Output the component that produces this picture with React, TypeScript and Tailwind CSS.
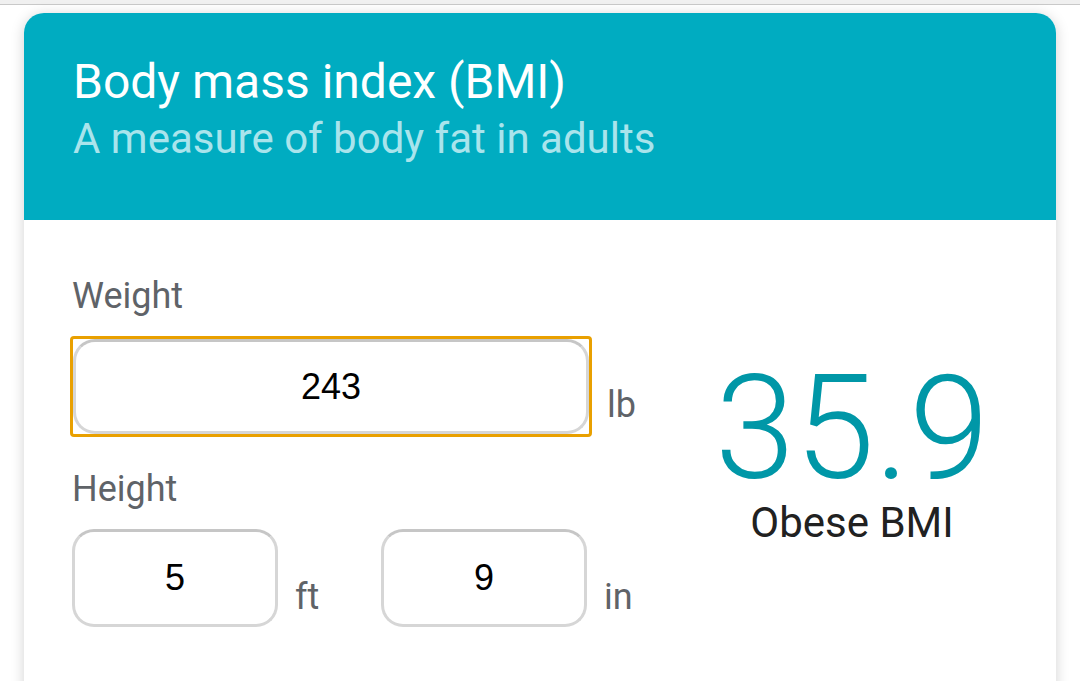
const ROBOTO = "font-['Roboto',sans-serif]";

function UnitInput({ value, width }: { value: string; width: string }) {
  return (
    <input
      type="text"
      defaultValue={value}
      className={`${width} h-[98px] rounded-[22px] border-[3px] border-[#d6d6d6] border-t-[#c6c6c6] bg-white text-center font-['Liberation_Sans',Arial,sans-serif] text-[36px] text-black outline-none`}
    />
  );
}

export default function App() {
  return (
    <div className="min-h-screen bg-white">
      <div className="h-[5px] border-b border-[#c9c9c9] bg-[#f0f0f0]" />

      <div className="px-[24px] pt-[8px]">
        <div className="overflow-hidden rounded-t-[20px] bg-white shadow-[0_2px_14px_rgba(0,0,0,0.18)]">
          <div className={`bg-[#00acc1] px-[49px] pt-[41px] pb-[57px] ${ROBOTO}`}>
            <h1 className="text-[48px] leading-[56px] font-normal text-white">Body mass index (BMI)</h1>
            <p className="mt-[4px] text-[42px] leading-[49px] text-[#a9e4ec]">A measure of body fat in adults</p>
          </div>

          <div className={`flex items-start px-[48px] pt-[55px] pb-[80px] ${ROBOTO}`}>
            <div className="flex w-[576px] flex-col">
              <label className="text-[36px] leading-[43px] text-[#5f6368]">Weight</label>
              <div className="mt-[18px] flex">
                <div className="-ml-[2px] rounded-[4px] border-[3px] border-[#e9a000]">
                  <input
                    type="text"
                    defaultValue="243"
                    className="block h-[95px] w-[516px] rounded-[22px] border-[3px] border-[#d6d6d6] border-t-[#c6c6c6] bg-white text-center font-['Liberation_Sans',Arial,sans-serif] text-[36px] text-black outline-none"
                  />
                </div>
                <span className="ml-[15px] self-end mb-[10px] text-[36px] leading-[43px] text-[#5f6368]">lb</span>
              </div>

              <label className="mt-[31px] text-[36px] leading-[43px] text-[#5f6368]">Height</label>
              <div className="mt-[18px] flex">
                <div className="flex w-[309px]">
                  <UnitInput value="5" width="w-[206px]" />
                  <span className="ml-[17px] self-end mb-[8px] text-[36px] leading-[43px] text-[#5f6368]">ft</span>
                </div>
                <div className="flex">
                  <UnitInput value="9" width="w-[206px]" />
                  <span className="ml-[17px] self-end mb-[8px] text-[36px] leading-[43px] text-[#5f6368]">in</span>
                </div>
              </div>
            </div>

            <div className="ml-auto flex w-[312px] flex-col items-center pt-[90px]">
              <div className="text-[144px] leading-[128px] font-light text-[#0097a7]">35.9</div>
              <div className="mt-[5px] text-[42px] leading-[50px] text-[#212121]">Obese BMI</div>
            </div>
          </div>
        </div>
      </div>
    </div>
  );
}
